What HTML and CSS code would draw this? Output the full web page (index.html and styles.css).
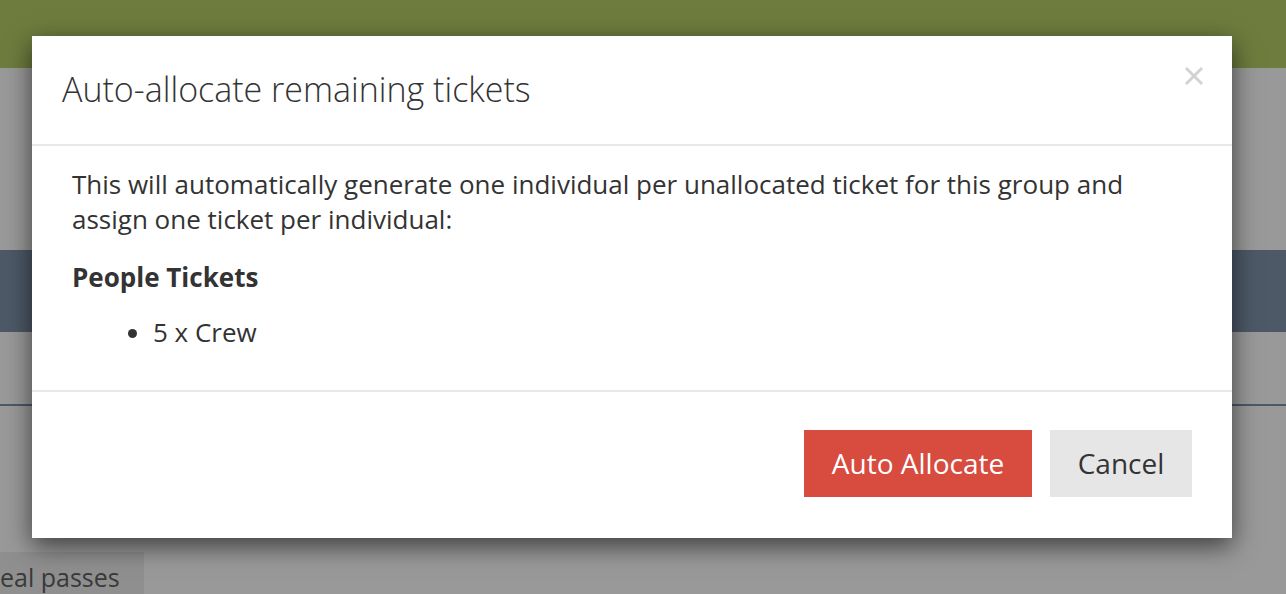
FILE: index.html
```html
<!DOCTYPE html>
<html lang="en">
<head>
<meta charset="utf-8">
<title>Auto-allocate remaining tickets</title>
<link rel="stylesheet" href="styles.css">
</head>
<body>
<div class="page">
  <div class="topbar"></div>
  <div class="gap1"></div>
  <div class="band"></div>
  <div class="gap2"></div>
  <div class="rule"></div>
  <div class="gap3"></div>
  <div class="tab">eal passes</div>
</div>

<div class="modal">
  <div class="modal-header">
    <h4 class="modal-title">Auto-allocate remaining tickets</h4>
    <span class="close" aria-label="Close">
      <svg width="20" height="20" viewBox="0 0 20 20"><path d="M2 2 L18 18 M18 2 L2 18" stroke="#d2d2d2" stroke-width="3" fill="none"/></svg>
    </span>
  </div>
  <div class="modal-body">
    <p class="intro">This will automatically generate one individual per unallocated ticket for this group and assign one ticket per individual:</p>
    <p class="group">People Tickets</p>
    <ul class="items">
      <li>5 x Crew</li>
    </ul>
  </div>
  <div class="modal-footer">
    <button class="btn btn-danger">Auto Allocate</button>
    <button class="btn btn-default">Cancel</button>
  </div>
</div>
</body>
</html>
```
FILE: styles.css
```css
html, body {
  margin: 0;
  padding: 0;
  width: 1286px;
  height: 594px;
  overflow: hidden;
  font-family: "Open Sans", "Liberation Sans", sans-serif;
  color: #333;
  background: #999999;
}

.page {
  display: flex;
  flex-direction: column;
  height: 594px;
}

.topbar {
  height: 68px;
  background: #6e7c3e;
}

.gap1 { height: 182px; }

.band {
  height: 82px;
  background: #4d5967;
}

.gap2 { height: 72px; }

.rule {
  height: 2px;
  background: #4d5967;
}

.gap3 { height: 146px; }

.tab {
  width: 144px;
  height: 42px;
  box-sizing: border-box;
  background: #8f8f8f;
  color: #3a3a3a;
  font-size: 25px;
  line-height: 50px;
  white-space: nowrap;
  overflow: hidden;
  padding-left: 0;
}

.modal {
  position: absolute;
  left: 32px;
  top: 36px;
  width: 1200px;
  height: 502px;
  background: #fff;
  box-shadow: 0 8px 24px rgba(0, 0, 0, 0.6);
  display: flex;
  flex-direction: column;
}

.modal-header {
  display: flex;
  justify-content: space-between;
  align-items: flex-start;
  padding: 29px 28px 31px 30px;
  border-bottom: 2px solid #e8e8e8;
}

.modal-title {
  margin: 0;
  font-size: 34px;
  font-weight: 300;
  line-height: 48px;
  color: #333;
}

.close {
  display: block;
  width: 20px;
  height: 20px;
  margin-top: 1px;
}

.modal-body {
  padding: 21px 40px 0 40px;
  height: 223px;
  font-size: 26px;
  line-height: 35px;
}

.intro {
  margin: 0 0 23px 0;
}

.group {
  margin: 0 0 20px 0;
  font-weight: 700;
}

.items {
  margin: 0;
  padding-left: 81px;
}

.modal-footer {
  border-top: 2px solid #e8e8e8;
  display: flex;
  justify-content: flex-end;
  gap: 18px;
  padding: 38px 40px 0 0;
}

.btn {
  height: 67px;
  border: none;
  padding: 0;
  font-family: "Open Sans", "Liberation Sans", sans-serif;
  font-size: 28px;
  line-height: 67px;
  cursor: pointer;
}

.btn-danger {
  width: 228px;
  background: #d84b3f;
  color: #fff;
}

.btn-default {
  width: 142px;
  background: #e6e6e6;
  color: #333;
}
```
